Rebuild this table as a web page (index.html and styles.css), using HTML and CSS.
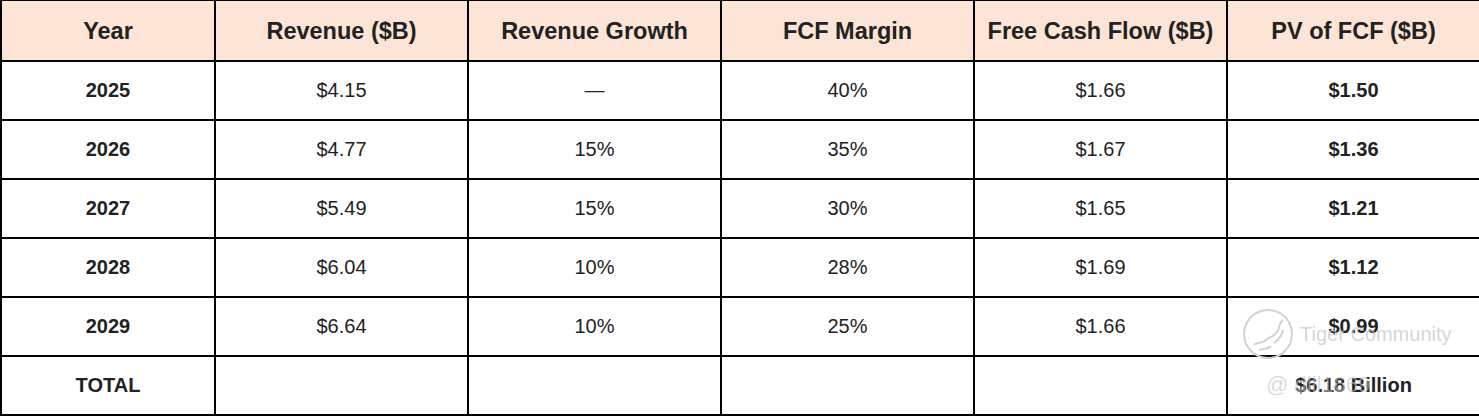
FILE: index.html
```html
<!DOCTYPE html>
<html>
<head>
<meta charset="utf-8">
<link rel="stylesheet" href="styles.css">
</head>
<body>
<div class="grid">
  <div class="cell head">Year</div>
  <div class="cell head">Revenue ($B)</div>
  <div class="cell head">Revenue Growth</div>
  <div class="cell head">FCF Margin</div>
  <div class="cell head">Free Cash Flow ($B)</div>
  <div class="cell head">PV of FCF ($B)</div>

  <div class="cell b">2025</div>
  <div class="cell">$4.15</div>
  <div class="cell">—</div>
  <div class="cell">40%</div>
  <div class="cell">$1.66</div>
  <div class="cell b">$1.50</div>

  <div class="cell b">2026</div>
  <div class="cell">$4.77</div>
  <div class="cell">15%</div>
  <div class="cell">35%</div>
  <div class="cell">$1.67</div>
  <div class="cell b">$1.36</div>

  <div class="cell b">2027</div>
  <div class="cell">$5.49</div>
  <div class="cell">15%</div>
  <div class="cell">30%</div>
  <div class="cell">$1.65</div>
  <div class="cell b">$1.21</div>

  <div class="cell b">2028</div>
  <div class="cell">$6.04</div>
  <div class="cell">10%</div>
  <div class="cell">28%</div>
  <div class="cell">$1.69</div>
  <div class="cell b">$1.12</div>

  <div class="cell b">2029</div>
  <div class="cell">$6.64</div>
  <div class="cell">10%</div>
  <div class="cell">25%</div>
  <div class="cell">$1.66</div>
  <div class="cell b">$0.99</div>

  <div class="cell b">TOTAL</div>
  <div class="cell"></div>
  <div class="cell"></div>
  <div class="cell"></div>
  <div class="cell"></div>
  <div class="cell b">$6.18 Billion</div>
</div>
<div class="watermark">
  <svg class="wm-logo" width="58" height="54" viewBox="0 0 58 54">
    <circle cx="28" cy="27" r="24" fill="none" stroke="#d2d2d2" stroke-width="2"/>
    <path d="M14 38 C18 34 22 37 26 33 C30 29 33 31 37 25 C40 21 39 15 43 13" fill="none" stroke="#d2d2d2" stroke-width="2"/>
    <path d="M19 43 C23 41 27 43 31 39 M34 36 C38 33 42 29 43 23" fill="none" stroke="#d2d2d2" stroke-width="2"/>
  </svg>
  <span class="wm-text">Tiger Community</span>
</div>
<div class="wm-user">@ dlll1669</div>
</body>
</html>
```
FILE: styles.css
```css
html, body {
  margin: 0;
  padding: 0;
  background: #fff;
  overflow: hidden;
}
body {
  width: 1479px;
  height: 417px;
  position: relative;
  font-family: "Liberation Sans", Arial, sans-serif;
  color: #222;
}
.grid {
  display: grid;
  grid-template-columns: 212px 251px 251px 251px 251px 251px;
  grid-template-rows: 59px repeat(6, 57px);
  gap: 2px;
  padding: 2px;
  background: #000;
  width: max-content;
  margin-top: -1px;
}
.cell {
  background: #fff;
  display: flex;
  align-items: center;
  justify-content: center;
  font-size: 20px;
}
.head {
  background: #fce4d6;
  font-weight: bold;
  font-size: 23.5px;
  padding-top: 2px;
}
.b {
  font-weight: bold;
}
.watermark {
  position: absolute;
  left: 1240px;
  top: 307px;
  display: flex;
  align-items: center;
  gap: 2px;
  pointer-events: none;
}
.wm-text {
  font-size: 20px;
  color: rgba(195, 195, 195, 0.7);
}
.wm-user {
  position: absolute;
  left: 1266px;
  top: 372px;
  font-size: 22px;
  color: rgba(195, 195, 195, 0.6);
  pointer-events: none;
}
```
